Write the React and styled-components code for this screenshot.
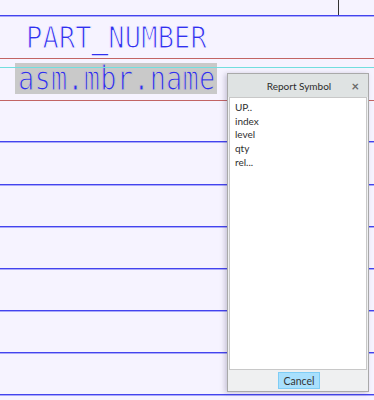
import React from 'react';
import styled, { createGlobalStyle } from 'styled-components';

const GlobalStyle = createGlobalStyle`
    html, body {
        margin: 0;
        padding: 0;
        background: #f6f3ff;
    }
`

const Sheet = styled.div`
    position: relative;
    width: 374px;
    height: 400px;
    overflow: hidden;
    background: #f6f3ff;
    font-family: "DejaVu Sans Mono", monospace;
`
const TopRow = styled.div`
    display: flex;
    height: 15px;
    overflow: hidden;
`
const TopCell = styled.div`
    flex: 1;
    position: relative;
    overflow: hidden;
`
const SideCell = styled.div`
    width: 35px;
    border-left: 1px solid #333;
`
const Rule = styled.div`
    height: 1px;
    background: ${p => p.$color};
    border-bottom: ${p => p.$light ? `1px solid ${p.$light}` : 'none'};
`
const Row = styled.div`
    display: flex;
    align-items: ${p => p.$align || 'center'};
    height: ${p => p.$h}px;
    padding-left: ${p => p.$pad || 0}px;
`
const CadText = styled.span`
    display: inline-block;
    color: #3030f0;
    font-size: 27px;
    line-height: 1;
    letter-spacing: 0.2px;
    white-space: pre;
    -webkit-text-stroke: 1px ${p => p.$bg || '#f6f3ff'};
    transform: scale(1, ${p => p.$sy});
    transform-origin: left center;
`
const Under = styled.span`
    -webkit-text-stroke: 0;
`
const CutText = styled(CadText)`
    position: absolute;
    left: 118px;
    top: -35px;
    color: #6a6af4;
`
const Highlight = styled.div`
    display: flex;
    align-items: center;
    height: 31px;
    width: 199px;
    padding-left: 3px;
    margin-top: 4px;
    background: #c9c9c9;
`
const Guide = styled.div`
    position: absolute;
    left: 0;
    right: 0;
    top: 67px;
    height: 1px;
    background: #72dede;
`
const Dialog = styled.div`
    position: absolute;
    left: 227px;
    top: 73px;
    width: 140px;
    height: 317px;
    display: flex;
    flex-direction: column;
    background: #eff0f1;
    border: 1px solid #a9a9a9;
    box-shadow: -2px 1px 5px rgba(60, 50, 90, 0.25);
    font-family: Lato, "Noto Sans", sans-serif;
    color: #333;
`
const TitleBar = styled.div`
    position: relative;
    height: 23px;
    display: flex;
    align-items: center;
    justify-content: center;
    padding-left: 2px;
    background: #dfe3e3;
    font-size: 10px;
    color: #2c2c2c;
`
const Close = styled.span`
    position: absolute;
    right: 9px;
    top: 4px;
    font-size: 13px;
    font-weight: 700;
    color: #6a6a6a;
`
const List = styled.ul`
    flex: 1;
    margin: 0 1px;
    padding: 3px 0 0 5px;
    list-style: none;
    background: #fff;
    border: 1px solid #c8c8c8;
`
const Item = styled.li`
    font-size: 10px;
    line-height: 13.7px;
    color: #2e2e2e;
`
const Footer = styled.div`
    height: 21px;
    display: flex;
    align-items: center;
    justify-content: center;
`
const Button = styled.button`
    width: 42px;
    height: 17px;
    padding: 0;
    margin-left: 2px;
    border: 1px solid #7fcdf5;
    background: #a9e0fd;
    font-family: Lato, "Noto Sans", sans-serif;
    font-size: 10.5px;
    color: #333;
`

const blue = { $color: '#4343ee', $light: '#a9a9fa' }
const red = { $color: '#c26464' }

const symbols = ['UP..', 'index', 'level', 'qty', 'rel...']
const lowerRows = [40, 41, 40, 40, 40, 40, 40]

export default function App() {
    return (
        <Sheet>
            <GlobalStyle />
            <TopRow>
                <TopCell>
                    <CutText $sy={1.12}>I<Under>_</Under></CutText>
                </TopCell>
                <SideCell />
            </TopRow>
            <Rule {...blue} />
            <Row $h={41} $pad={26}>
                <CadText $sy={1.12}>PART<Under>_</Under>NUMBER</CadText>
            </Row>
            <Rule {...red} />
            <Row $h={41} $pad={15} $align="flex-start">
                <Highlight>
                    <CadText $sy={1.25} $bg="#c9c9c9">asm.mbr.name</CadText>
                </Highlight>
            </Row>
            <Rule {...red} />
            {lowerRows.map((h, i) => (
                <React.Fragment key={i}>
                    <Row $h={h} />
                    <Rule {...blue} />
                </React.Fragment>
            ))}
            <Guide />
            <Dialog>
                <TitleBar>
                    Report Symbol
                    <Close>×</Close>
                </TitleBar>
                <List>
                    {symbols.map(s => <Item key={s}>{s}</Item>)}
                </List>
                <Footer>
                    <Button>Cancel</Button>
                </Footer>
            </Dialog>
        </Sheet>
    );
}
